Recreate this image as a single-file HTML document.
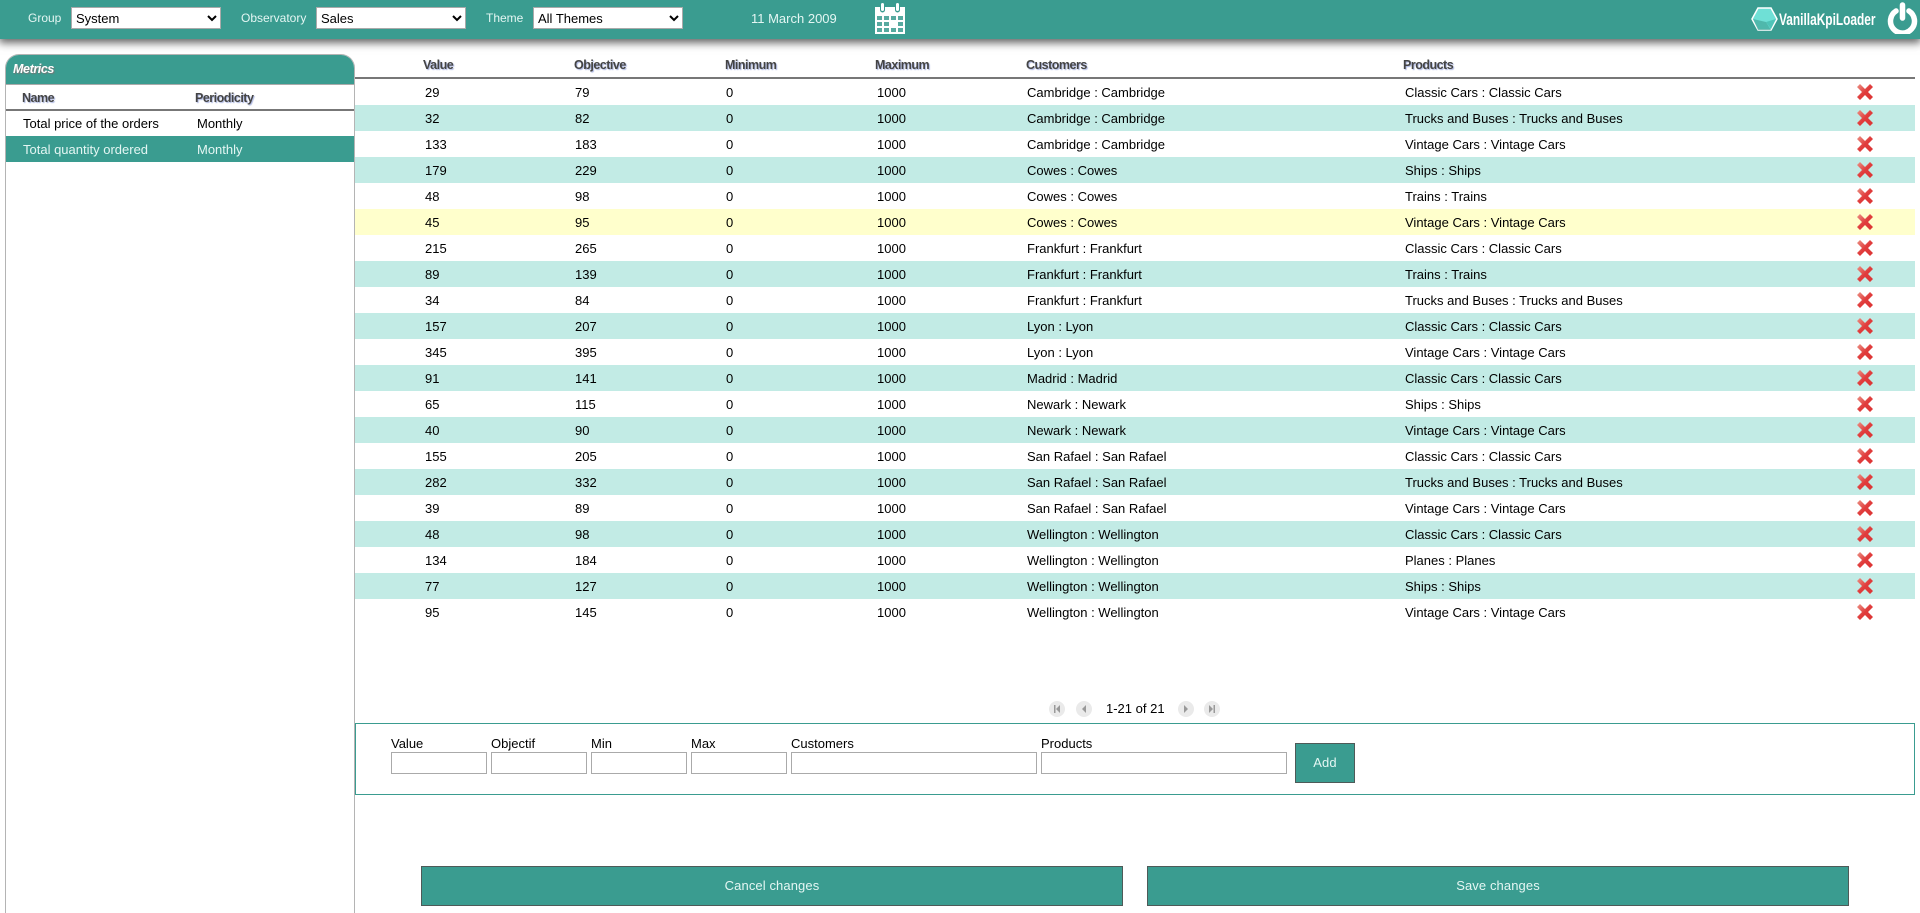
<!DOCTYPE html>
<html><head><meta charset="utf-8"><title>VanillaKpiLoader</title>
<style>
html,body{margin:0;padding:0;width:1920px;height:913px;overflow:hidden;background:#fff;font-family:"Liberation Sans",Arial,sans-serif;font-size:13px;color:#000}
.a{position:absolute}
#top{left:0;top:0;width:1920px;height:39px;background:#3a9c90;box-shadow:0 3px 8px 1px rgba(0,0,0,.6)}
.lbl{color:#e4f6f3;font-size:12px;line-height:16px;white-space:nowrap}
select{position:absolute;top:7px;height:22px;border:1px solid #aaa;background:#fff;font:13px "Liberation Sans",Arial,sans-serif;padding:0;margin:0;box-sizing:border-box;border-radius:0;color:#000}
#side{left:5px;top:54px;width:350px;height:859px;border:1px solid #b4b4b4;border-bottom:0;border-radius:14px 14px 0 0;box-sizing:border-box;background:#fff;overflow:hidden}
#side .t{left:0;top:0;width:100%;height:30px;background:#3a9c90;border-bottom:1px solid #aaa;box-sizing:border-box}
.th{font-weight:bold;font-size:12.5px;color:#444;text-shadow:1px 1px 1px #a9b4e0;letter-spacing:-.5px;white-space:nowrap;line-height:16px}
.c{white-space:nowrap;line-height:16px}
.r{left:355px;width:1560px;height:26px}
.r span{position:absolute;top:6px;line-height:16px;white-space:nowrap}
.r svg{position:absolute;left:1501px;top:4px}
.g{background:#c2ebe5}.y{background:#ffc}
.inp{top:752px;height:22px;border:1px solid #aaa;box-sizing:border-box;background:#fff}
.btn{background:#3a9c90;border:1px solid #4e5a58;box-sizing:border-box;color:#e4f6f3;text-align:center;font-size:13px;letter-spacing:.1px}
.pg{top:701px;width:16px;height:16px;border-radius:8px;background:#eaeaea}
</style></head><body>
<div class="a" id="top"></div>
<div class="a lbl" style="left:28px;top:10px">Group</div>
<select style="left:71px;width:150px"><option>System</option></select>
<div class="a lbl" style="left:241px;top:10px">Observatory</div>
<select style="left:316px;width:150px"><option>Sales</option></select>
<div class="a lbl" style="left:486px;top:10px">Theme</div>
<select style="left:533px;width:150px"><option>All Themes</option></select>
<div class="a lbl" style="left:751px;top:11px;font-size:13px">11 March 2009</div>
<svg class="a" style="left:875px;top:3px" width="30" height="31" viewBox="0 0 30 31"><path fill="#fff" d="M0 4h5v3a2.5 2.5 0 0 0 5 0V4h10v3a2.5 2.5 0 0 0 5 0V4h5v27H0z"/><rect x="6" y="0" width="3" height="8" rx="1.5" fill="#fff"/><rect x="21" y="0" width="3" height="8" rx="1.5" fill="#fff"/><g fill="#3a9c90" opacity=".85"><rect x="2" y="13" width="5" height="4"/><rect x="9" y="13" width="5" height="4"/><rect x="16" y="13" width="5" height="4"/><rect x="23" y="13" width="5" height="4"/><rect x="2" y="19" width="5" height="4"/><rect x="9" y="19" width="5" height="4"/><rect x="23" y="19" width="5" height="4"/><rect x="2" y="25" width="5" height="4"/><rect x="9" y="25" width="5" height="4"/><rect x="16" y="25" width="5" height="4"/><rect x="23" y="25" width="5" height="4"/></g></svg>
<svg class="a" style="left:1751px;top:7px" width="27" height="24" viewBox="0 0 27 24"><path d="M7 1h13l6 11-6 11H7L1 12z" fill="#6fe0d6" stroke="#fff" stroke-width="1.5"/><path d="M2 12l13 3 5 8H7z" fill="#3a9c90" opacity=".6"/><path d="M15 15l10-3-5 10z" fill="#4fc4b8"/></svg>
<div class="a" style="left:1779px;top:10px;color:#fff;font-weight:bold;font-size:17px;line-height:20px;white-space:nowrap;transform:scaleX(.7);transform-origin:0 0">VanillaKpiLoader</div>
<svg class="a" style="left:1887px;top:2px" width="31" height="32" viewBox="0 0 31 32"><path d="M9 9a12 12 0 1 0 13 0" fill="none" stroke="#fff" stroke-width="5.500" stroke-linecap="round"/><path d="M15.500 3v13" stroke="#fff" stroke-width="5.500" stroke-linecap="round"/></svg>

<div class="a" id="side">
<div class="a t"></div>
<div class="a" style="left:7px;top:6px;color:#fff;font-weight:bold;font-style:italic;font-size:12.5px;line-height:16px;letter-spacing:-.4px;text-shadow:1px 1px 1px #777">Metrics</div>
<div class="a th" style="left:16px;top:35px">Name</div>
<div class="a th" style="left:189px;top:35px">Periodicity</div>
<div class="a" style="left:0;top:54px;width:100%;height:2px;background:#777"></div>
<div class="a c" style="left:17px;top:61px">Total price of the orders</div>
<div class="a c" style="left:191px;top:61px">Monthly</div>
<div class="a" style="left:0;top:81px;width:100%;height:26px;background:#3a9c90"></div>
<div class="a c" style="left:17px;top:87px;color:#e4f6f3">Total quantity ordered</div>
<div class="a c" style="left:191px;top:87px;color:#e4f6f3">Monthly</div>
</div>

<div class="a th" style="left:423px;top:57px">Value</div>
<div class="a th" style="left:574px;top:57px">Objective</div>
<div class="a th" style="left:725px;top:57px">Minimum</div>
<div class="a th" style="left:875px;top:57px">Maximum</div>
<div class="a th" style="left:1026px;top:57px">Customers</div>
<div class="a th" style="left:1403px;top:57px">Products</div>
<div class="a" style="left:355px;top:77px;width:1560px;height:2px;background:#777"></div>

<svg width="0" height="0" style="position:absolute"><defs><linearGradient id="gr" x1="0" y1="0" x2="1" y2="1"><stop offset="0" stop-color="#ec9488"/><stop offset=".5" stop-color="#e03c3c"/><stop offset="1" stop-color="#dc3434"/></linearGradient><symbol id="x" viewBox="0 0 18 18"><path d="M4 1l5 5 5-5 3 3-5 5 5 5-3 3-5-5-5 5-3-3 5-5-5-5z" fill="url(#gr)"/></symbol></defs></svg>

<div class="a r" style="top:79px"><span style="left:70px">29</span><span style="left:220px">79</span><span style="left:371px">0</span><span style="left:522px">1000</span><span style="left:672px">Cambridge : Cambridge</span><span style="left:1050px">Classic Cars : Classic Cars</span><svg width="18" height="18"><use href="#x"/></svg></div>
<div class="a r g" style="top:105px"><span style="left:70px">32</span><span style="left:220px">82</span><span style="left:371px">0</span><span style="left:522px">1000</span><span style="left:672px">Cambridge : Cambridge</span><span style="left:1050px">Trucks and Buses : Trucks and Buses</span><svg width="18" height="18"><use href="#x"/></svg></div>
<div class="a r" style="top:131px"><span style="left:70px">133</span><span style="left:220px">183</span><span style="left:371px">0</span><span style="left:522px">1000</span><span style="left:672px">Cambridge : Cambridge</span><span style="left:1050px">Vintage Cars : Vintage Cars</span><svg width="18" height="18"><use href="#x"/></svg></div>
<div class="a r g" style="top:157px"><span style="left:70px">179</span><span style="left:220px">229</span><span style="left:371px">0</span><span style="left:522px">1000</span><span style="left:672px">Cowes : Cowes</span><span style="left:1050px">Ships : Ships</span><svg width="18" height="18"><use href="#x"/></svg></div>
<div class="a r" style="top:183px"><span style="left:70px">48</span><span style="left:220px">98</span><span style="left:371px">0</span><span style="left:522px">1000</span><span style="left:672px">Cowes : Cowes</span><span style="left:1050px">Trains : Trains</span><svg width="18" height="18"><use href="#x"/></svg></div>
<div class="a r y" style="top:209px"><span style="left:70px">45</span><span style="left:220px">95</span><span style="left:371px">0</span><span style="left:522px">1000</span><span style="left:672px">Cowes : Cowes</span><span style="left:1050px">Vintage Cars : Vintage Cars</span><svg width="18" height="18"><use href="#x"/></svg></div>
<div class="a r" style="top:235px"><span style="left:70px">215</span><span style="left:220px">265</span><span style="left:371px">0</span><span style="left:522px">1000</span><span style="left:672px">Frankfurt : Frankfurt</span><span style="left:1050px">Classic Cars : Classic Cars</span><svg width="18" height="18"><use href="#x"/></svg></div>
<div class="a r g" style="top:261px"><span style="left:70px">89</span><span style="left:220px">139</span><span style="left:371px">0</span><span style="left:522px">1000</span><span style="left:672px">Frankfurt : Frankfurt</span><span style="left:1050px">Trains : Trains</span><svg width="18" height="18"><use href="#x"/></svg></div>
<div class="a r" style="top:287px"><span style="left:70px">34</span><span style="left:220px">84</span><span style="left:371px">0</span><span style="left:522px">1000</span><span style="left:672px">Frankfurt : Frankfurt</span><span style="left:1050px">Trucks and Buses : Trucks and Buses</span><svg width="18" height="18"><use href="#x"/></svg></div>
<div class="a r g" style="top:313px"><span style="left:70px">157</span><span style="left:220px">207</span><span style="left:371px">0</span><span style="left:522px">1000</span><span style="left:672px">Lyon : Lyon</span><span style="left:1050px">Classic Cars : Classic Cars</span><svg width="18" height="18"><use href="#x"/></svg></div>
<div class="a r" style="top:339px"><span style="left:70px">345</span><span style="left:220px">395</span><span style="left:371px">0</span><span style="left:522px">1000</span><span style="left:672px">Lyon : Lyon</span><span style="left:1050px">Vintage Cars : Vintage Cars</span><svg width="18" height="18"><use href="#x"/></svg></div>
<div class="a r g" style="top:365px"><span style="left:70px">91</span><span style="left:220px">141</span><span style="left:371px">0</span><span style="left:522px">1000</span><span style="left:672px">Madrid : Madrid</span><span style="left:1050px">Classic Cars : Classic Cars</span><svg width="18" height="18"><use href="#x"/></svg></div>
<div class="a r" style="top:391px"><span style="left:70px">65</span><span style="left:220px">115</span><span style="left:371px">0</span><span style="left:522px">1000</span><span style="left:672px">Newark : Newark</span><span style="left:1050px">Ships : Ships</span><svg width="18" height="18"><use href="#x"/></svg></div>
<div class="a r g" style="top:417px"><span style="left:70px">40</span><span style="left:220px">90</span><span style="left:371px">0</span><span style="left:522px">1000</span><span style="left:672px">Newark : Newark</span><span style="left:1050px">Vintage Cars : Vintage Cars</span><svg width="18" height="18"><use href="#x"/></svg></div>
<div class="a r" style="top:443px"><span style="left:70px">155</span><span style="left:220px">205</span><span style="left:371px">0</span><span style="left:522px">1000</span><span style="left:672px">San Rafael : San Rafael</span><span style="left:1050px">Classic Cars : Classic Cars</span><svg width="18" height="18"><use href="#x"/></svg></div>
<div class="a r g" style="top:469px"><span style="left:70px">282</span><span style="left:220px">332</span><span style="left:371px">0</span><span style="left:522px">1000</span><span style="left:672px">San Rafael : San Rafael</span><span style="left:1050px">Trucks and Buses : Trucks and Buses</span><svg width="18" height="18"><use href="#x"/></svg></div>
<div class="a r" style="top:495px"><span style="left:70px">39</span><span style="left:220px">89</span><span style="left:371px">0</span><span style="left:522px">1000</span><span style="left:672px">San Rafael : San Rafael</span><span style="left:1050px">Vintage Cars : Vintage Cars</span><svg width="18" height="18"><use href="#x"/></svg></div>
<div class="a r g" style="top:521px"><span style="left:70px">48</span><span style="left:220px">98</span><span style="left:371px">0</span><span style="left:522px">1000</span><span style="left:672px">Wellington : Wellington</span><span style="left:1050px">Classic Cars : Classic Cars</span><svg width="18" height="18"><use href="#x"/></svg></div>
<div class="a r" style="top:547px"><span style="left:70px">134</span><span style="left:220px">184</span><span style="left:371px">0</span><span style="left:522px">1000</span><span style="left:672px">Wellington : Wellington</span><span style="left:1050px">Planes : Planes</span><svg width="18" height="18"><use href="#x"/></svg></div>
<div class="a r g" style="top:573px"><span style="left:70px">77</span><span style="left:220px">127</span><span style="left:371px">0</span><span style="left:522px">1000</span><span style="left:672px">Wellington : Wellington</span><span style="left:1050px">Ships : Ships</span><svg width="18" height="18"><use href="#x"/></svg></div>
<div class="a r" style="top:599px"><span style="left:70px">95</span><span style="left:220px">145</span><span style="left:371px">0</span><span style="left:522px">1000</span><span style="left:672px">Wellington : Wellington</span><span style="left:1050px">Vintage Cars : Vintage Cars</span><svg width="18" height="18"><use href="#x"/></svg></div>

<div class="a pg" style="left:1049px"><svg width="16" height="16"><path d="M5 4h1.500v8H5zM11 4v8L7 8z" fill="#999"/></svg></div>
<div class="a pg" style="left:1076px"><svg width="16" height="16"><path d="M10 4v8L6 8z" fill="#999"/></svg></div>
<div class="a c" style="left:1106px;top:701px">1-21 of 21</div>
<div class="a pg" style="left:1178px"><svg width="16" height="16"><path d="M6 4v8l4-4z" fill="#999"/></svg></div>
<div class="a pg" style="left:1204px"><svg width="16" height="16"><path d="M5 4v8l4-4zM9.500 4H11v8H9.500z" fill="#999"/></svg></div>

<div class="a" style="left:355px;top:723px;width:1560px;height:72px;border:1px solid #3a9c90;box-sizing:border-box"></div>
<div class="a c" style="left:391px;top:736px">Value</div>
<div class="a c" style="left:491px;top:736px">Objectif</div>
<div class="a c" style="left:591px;top:736px">Min</div>
<div class="a c" style="left:691px;top:736px">Max</div>
<div class="a c" style="left:791px;top:736px">Customers</div>
<div class="a c" style="left:1041px;top:736px">Products</div>
<div class="a inp" style="left:391px;width:96px"></div>
<div class="a inp" style="left:491px;width:96px"></div>
<div class="a inp" style="left:591px;width:96px"></div>
<div class="a inp" style="left:691px;width:96px"></div>
<div class="a inp" style="left:791px;width:246px"></div>
<div class="a inp" style="left:1041px;width:246px"></div>
<div class="a btn" style="left:1295px;top:743px;width:60px;height:40px;line-height:38px">Add</div>
<div class="a btn" style="left:421px;top:866px;width:702px;height:40px;line-height:38px">Cancel changes</div>
<div class="a btn" style="left:1147px;top:866px;width:702px;height:40px;line-height:38px">Save changes</div>
</body></html>
